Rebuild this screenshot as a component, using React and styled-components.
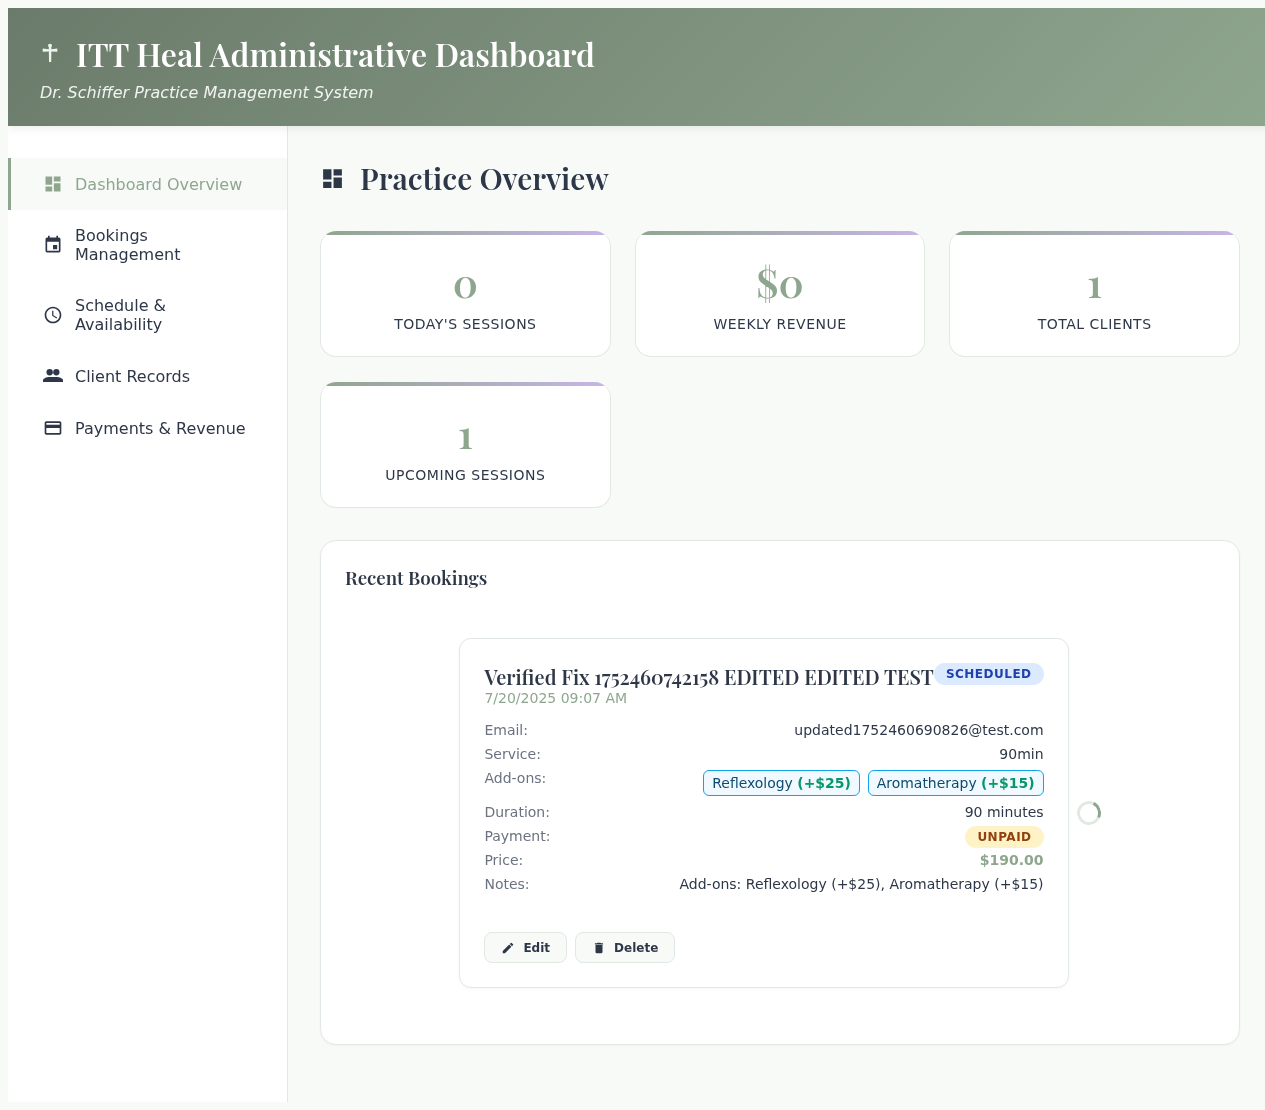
import styled, { createGlobalStyle } from 'styled-components';
import { MdDashboard, MdEvent, MdAccessTime, MdPayment, MdEdit, MdDelete } from 'react-icons/md';

const sage = '#8fa68e';
const darkSage = '#6b7b6b';
const charcoal = '#2d3748';
const line = '#e2e8e2';
const mist = '#f8faf8';
const headingFont = `"Playfair Display", "Liberation Serif", serif`;

const GlobalStyle = createGlobalStyle`
  * {
    box-sizing: border-box;
  }

  body {
    margin: 8px 0 8px 8px;
    background: ${mist};
    color: ${charcoal};
    font-family: "DejaVu Sans", sans-serif;
  }
`;

const Shell = styled.div`
  width: 1264px;
  min-height: calc(100vh - 16px);
  display: flex;
  flex-direction: column;
  will-change: transform;
`;

const Header = styled.header`
  position: relative;
  z-index: 1;
  height: 118px;
  padding: 24px 32px;
  background: linear-gradient(135deg, ${darkSage}, ${sage});
  color: white;
  box-shadow: 0 2px 10px rgba(0, 0, 0, 0.08);
`;

const HeaderTitle = styled.h1`
  margin: 0 0 8px;
  display: flex;
  align-items: center;
  gap: 16px;
  font-family: ${headingFont};
  font-size: 32px;
  font-weight: 600;
  line-height: 43px;

  svg {
    width: 20px;
    height: 24px;
    flex-shrink: 0;
  }
`;

const Subtitle = styled.p`
  margin: 0;
  font-size: 16px;
  font-style: italic;
  opacity: 0.9;
`;

const Body = styled.div`
  flex: 1;
  display: flex;
`;

const Sidebar = styled.nav`
  width: 280px;
  flex-shrink: 0;
  padding: 32px 0;
  background: white;
  border-right: 1px solid ${line};
`;

const NavItem = styled.a`
  display: flex;
  align-items: center;
  gap: 12px;
  padding: 16px 32px;
  border-left: 3px solid ${(p) => (p.$active ? sage : 'transparent')};
  background: ${(p) => (p.$active ? mist : 'transparent')};
  color: ${(p) => (p.$active ? sage : charcoal)};
  font-size: 16px;

  svg {
    width: 20px;
    height: 20px;
    flex-shrink: 0;
  }
`;

const Main = styled.main`
  flex: 1;
  min-width: 0;
  padding: 32px;
`;

const PageTitle = styled.h2`
  margin: 0 0 33px;
  display: flex;
  align-items: center;
  gap: 15px;
  font-family: ${headingFont};
  font-size: 30px;
  font-weight: 600;
  line-height: 40px;

  svg {
    width: 25px;
    height: 25px;
    flex-shrink: 0;
  }
`;

const StatsGrid = styled.div`
  display: grid;
  grid-template-columns: repeat(3, 1fr);
  gap: 25px 24px;
  margin-bottom: 32px;
`;

const StatCard = styled.div`
  position: relative;
  overflow: hidden;
  padding: 25px 24px 24px;
  background: white;
  border: 1px solid ${line};
  border-top: 0;
  border-radius: 16px;
  text-align: center;

  &::before {
    content: '';
    position: absolute;
    top: 0;
    left: 0;
    right: 0;
    height: 4px;
    background: linear-gradient(90deg, ${sage}, #c8b5e8);
  }
`;

const StatValue = styled.div`
  font-family: ${headingFont};
  font-size: 40px;
  font-weight: 600;
  line-height: 51px;
  margin-bottom: 9px;
  color: ${sage};
`;

const StatLabel = styled.div`
  font-size: 14px;
  line-height: 16px;
  letter-spacing: 0.5px;
  text-transform: uppercase;
`;

const Panel = styled.section`
  padding: 24px;
  background: white;
  border: 1px solid ${line};
  border-radius: 16px;
  box-shadow: 0 1px 3px rgba(0, 0, 0, 0.04);
`;

const PanelTitle = styled.h3`
  margin: 0 0 16px;
  font-family: ${headingFont};
  font-size: 18.72px;
  font-weight: 600;
  line-height: 25px;
`;

const Carousel = styled.div`
  display: flex;
  align-items: center;
  justify-content: center;
  gap: 8px;
  padding: 32px 0;
`;

const BookingCard = styled.article`
  padding: 24px;
  background: white;
  border: 1px solid ${line};
  border-radius: 12px;
  box-shadow: 0 1px 3px rgba(0, 0, 0, 0.04);
`;

const CardHead = styled.div`
  display: flex;
  justify-content: space-between;
  align-items: flex-start;
  margin-bottom: 16px;
`;

const ClientName = styled.h4`
  margin: 0;
  font-family: ${headingFont};
  font-size: 20px;
  font-weight: 600;
  line-height: 27px;
  white-space: nowrap;
`;

const WhenText = styled.div`
  font-size: 14px;
  color: ${sage};
`;

const Badge = styled.span`
  padding: 4px 12px;
  border-radius: 12px;
  background: ${(p) => p.$bg};
  color: ${(p) => p.$fg};
  font-size: 12px;
  font-weight: 700;
  letter-spacing: 0.5px;
  line-height: 14px;
  text-transform: uppercase;
  white-space: nowrap;
`;

const DetailRow = styled.div`
  display: flex;
  justify-content: space-between;
  align-items: flex-start;
  margin-bottom: 8px;
  font-size: 14px;
  line-height: 16px;
`;

const DetailLabel = styled.span`
  color: #6b7280;
`;

const DetailValue = styled.span`
  text-align: right;
`;

const Price = styled.span`
  color: ${sage};
  font-weight: 700;
`;

const AddOns = styled.div`
  display: flex;
  gap: 8px;
`;

const AddOnPill = styled.span`
  padding: 4px 8px;
  border: 1px solid #0ea5e9;
  border-radius: 6px;
  background: #f0f9ff;
  color: #0c4a6e;
  font-size: 13.95px;

  strong {
    color: #059669;
  }
`;

const Actions = styled.div`
  display: flex;
  gap: 8px;
  margin-top: 40px;
`;

const ActionButton = styled.button`
  display: flex;
  align-items: center;
  gap: 8px;
  height: 31px;
  padding: 0 16px;
  background: ${mist};
  border: 1px solid ${line};
  border-radius: 8px;
  color: ${charcoal};
  font-family: inherit;
  font-size: 12px;
  font-weight: 700;

  svg {
    width: 14px;
    height: 14px;
  }
`;

const Spinner = styled.div`
  width: 24px;
  height: 24px;
  flex-shrink: 0;
  border: 3px solid ${line};
  border-right-color: ${sage};
  border-radius: 50%;
  transform: rotate(-20deg);
`;

const CrossIcon = () => (
  <svg viewBox="0 0 20 24" fill="currentColor" opacity="0.9">
    <ellipse cx="10" cy="3.6" rx="2" ry="1.8" />
    <path d="M2.7 6.6L8.5 7.2H11.5L17.3 6.6V9.8L11.5 9.6H8.5L2.7 9.8Z" />
    <path d="M8.8 5H11.4L11.2 20H9Z" />
  </svg>
);

const PeopleIcon = () => (
  <svg viewBox="0 0 24 24" fill="currentColor">
    <circle cx="8" cy="7.5" r="3.8" />
    <circle cx="16" cy="7.5" r="3.8" />
    <path d="M0 19.2v-2c0-2.4 4-4 8-4h8c4 0 8 1.6 8 4v2z" />
  </svg>
);

const navItems = [
  { label: 'Dashboard Overview', Icon: MdDashboard, active: true },
  { label: 'Bookings Management', Icon: MdEvent },
  { label: 'Schedule & Availability', Icon: MdAccessTime },
  { label: 'Client Records', Icon: PeopleIcon },
  { label: 'Payments & Revenue', Icon: MdPayment },
];

const stats = [
  { value: '0', label: "Today's Sessions" },
  { value: '$0', label: 'Weekly Revenue' },
  { value: '1', label: 'Total Clients' },
  { value: '1', label: 'Upcoming Sessions' },
];

const App = () => {
  return (
    <Shell>
      <GlobalStyle />
      <Header>
        <HeaderTitle>
          <CrossIcon />
          ITT Heal Administrative Dashboard
        </HeaderTitle>
        <Subtitle>Dr. Schiffer Practice Management System</Subtitle>
      </Header>
      <Body>
        <Sidebar>
          {navItems.map(({ label, Icon, active }) => (
            <NavItem key={label} $active={active}>
              <Icon />
              <span>{label}</span>
            </NavItem>
          ))}
        </Sidebar>
        <Main>
          <PageTitle>
            <MdDashboard />
            Practice Overview
          </PageTitle>
          <StatsGrid>
            {stats.map((stat) => (
              <StatCard key={stat.label}>
                <StatValue>{stat.value}</StatValue>
                <StatLabel>{stat.label}</StatLabel>
              </StatCard>
            ))}
          </StatsGrid>
          <Panel>
            <PanelTitle>Recent Bookings</PanelTitle>
            <Carousel>
              <BookingCard>
                <CardHead>
                  <div>
                    <ClientName>Verified Fix 1752460742158 EDITED EDITED TEST</ClientName>
                    <WhenText>7/20/2025 09:07 AM</WhenText>
                  </div>
                  <Badge $bg="#dbeafe" $fg="#1e40af">Scheduled</Badge>
                </CardHead>
                <DetailRow>
                  <DetailLabel>Email:</DetailLabel>
                  <DetailValue>updated1752460690826@test.com</DetailValue>
                </DetailRow>
                <DetailRow>
                  <DetailLabel>Service:</DetailLabel>
                  <DetailValue>90min</DetailValue>
                </DetailRow>
                <DetailRow>
                  <DetailLabel>Add-ons:</DetailLabel>
                  <AddOns>
                    <AddOnPill>Reflexology <strong>(+$25)</strong></AddOnPill>
                    <AddOnPill>Aromatherapy <strong>(+$15)</strong></AddOnPill>
                  </AddOns>
                </DetailRow>
                <DetailRow>
                  <DetailLabel>Duration:</DetailLabel>
                  <DetailValue>90 minutes</DetailValue>
                </DetailRow>
                <DetailRow>
                  <DetailLabel>Payment:</DetailLabel>
                  <DetailValue>
                    <Badge $bg="#fef3c7" $fg="#92400e">Unpaid</Badge>
                  </DetailValue>
                </DetailRow>
                <DetailRow>
                  <DetailLabel>Price:</DetailLabel>
                  <Price>$190.00</Price>
                </DetailRow>
                <DetailRow>
                  <DetailLabel>Notes:</DetailLabel>
                  <DetailValue>Add-ons: Reflexology (+$25), Aromatherapy (+$15)</DetailValue>
                </DetailRow>
                <Actions>
                  <ActionButton><MdEdit />Edit</ActionButton>
                  <ActionButton><MdDelete />Delete</ActionButton>
                </Actions>
              </BookingCard>
              <Spinner />
            </Carousel>
          </Panel>
        </Main>
      </Body>
    </Shell>
  );
};

export default App;
